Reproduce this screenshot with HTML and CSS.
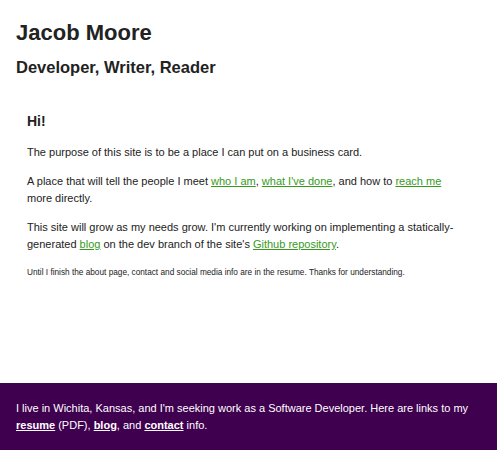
FILE: index.html
```html
<!DOCTYPE html>
<html>
<head>
<meta charset="utf-8">
<link rel="stylesheet" href="styles.css">
</head>
<body>
<div class="page">
  <header class="header">
    <h1 class="name">Jacob Moore</h1>
    <h2 class="tagline">Developer, Writer, Reader</h2>
  </header>
  <main class="main">
    <h3 class="hi">Hi!</h3>
    <p class="para">The purpose of this site is to be a place I can put on a business card.</p>
    <p class="para">A place that will tell the people I meet <a href="#">who I am</a>, <a href="#">what I've done</a>, and how to <a href="#">reach me</a> more directly.</p>
    <p class="para">This site will grow as my needs grow. I'm currently working on implementing a statically-generated <a href="#">blog</a> on the dev branch of the site's <a href="#">Github repository</a>.</p>
    <p class="small">Until I finish the about page, contact and social media info are in the resume. Thanks for understanding.</p>
  </main>
  <footer class="footer">
    <p class="foot-text">I live in Wichita, Kansas, and I'm seeking work as a Software Developer. Here are links to my <a href="#">resume</a> (PDF), <a href="#">blog</a>, and <a href="#">contact</a> info.</p>
  </footer>
</div>
</body>
</html>
```
FILE: styles.css
```css
html, body {
  margin: 0;
  padding: 0;
}
body {
  font-family: "Liberation Sans", Arial, sans-serif;
  color: #222;
  background: #fff;
}
.page {
  min-height: 100vh;
  display: flex;
  flex-direction: column;
}
.header {
  padding: 20px 16px 0;
}
.name {
  font-size: 22px;
  font-weight: bold;
  margin: 0;
  line-height: 26px;
}
.tagline {
  font-size: 16.5px;
  font-weight: bold;
  margin: 10px 0 0;
  line-height: 22px;
}
.main {
  padding: 34px 36px 0 27px;
}
.hi {
  font-size: 14px;
  font-weight: bold;
  margin: 0 0 14px;
  line-height: 18px;
}
.para {
  font-size: 11px;
  line-height: 17px;
  margin: 0 0 12px;
}
.para a {
  color: #369a1c;
}
.small {
  font-size: 8.25px;
  margin: 14px 0 0;
  line-height: 12px;
}
.footer {
  margin-top: auto;
  background: #3f0050;
  color: #fff;
  padding: 17px 16px 16px;
}
.foot-text {
  margin: 0;
  font-size: 11px;
  line-height: 17px;
}
.foot-text a {
  color: #fff;
  font-weight: bold;
}
```
